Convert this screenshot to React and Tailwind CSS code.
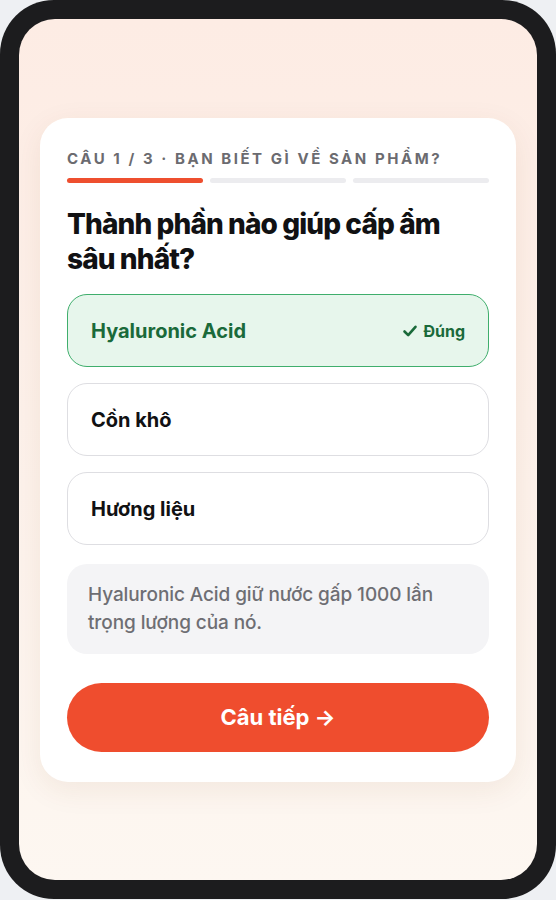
import React from "react";

function Check() {
  return (
    <svg width="16" height="16" viewBox="0 0 16 16" fill="none" className="mr-[5px]">
      <path d="M2.5 8.5 L6.2 12.2 L13.5 3.8" stroke="currentColor" strokeWidth="2.6" strokeLinecap="round" strokeLinejoin="round" />
    </svg>
  );
}

export default function App() {
  const font = { fontFamily: "Inter, 'Noto Sans', sans-serif" };
  return (
    <div className="w-[556px] h-[900px] bg-[#eef0f3]" style={font}>
      <div className="h-[899px] rounded-[54px] bg-[#1c1c1e] p-[19px]">
        <div className="h-full rounded-[36px] bg-gradient-to-b from-[#fdece4] to-[#fdf7f1] px-[21px] pt-[99px]">
          <div className="bg-white rounded-[28px] shadow-[0_8px_30px_rgba(120,60,30,0.08)] px-[27px] pt-[31px] pb-[30px]">
            <div className="text-[15px] leading-[20px] font-bold tracking-[0.17em] text-[#6b6b70] whitespace-nowrap">
              CÂU 1 / 3 · BẠN BIẾT GÌ VỀ SẢN PHẨM?
            </div>
            <div className="mt-[9px] grid grid-cols-3 gap-[7px]">
              <div className="h-[5px] rounded-full bg-[#ee4f2f]" />
              <div className="h-[5px] rounded-full bg-[#ececef]" />
              <div className="h-[5px] rounded-full bg-[#ececef]" />
            </div>
            <h1 className="mt-[24px] text-[28px] leading-[35px] font-extrabold tracking-[-0.032em] text-[#111113]">
              Thành phần nào giúp cấp ẩm sâu nhất?
            </h1>
            <div className="mt-[17px] flex flex-col gap-[16px]">
              <div className="h-[73px] rounded-[20px] border-[1.5px] border-[#3fae6c] bg-[#e7f6ec] px-[23px] flex items-center justify-between">
                <span className="text-[20px] font-bold text-[#1a6a3a]">Hyaluronic Acid</span>
                <span className="flex items-center text-[16px] font-bold text-[#1a6a3a]">
                  <Check />
                  Đúng
                </span>
              </div>
              <div className="h-[73px] rounded-[20px] border-[1.5px] border-[#dedee2] bg-white px-[23px] flex items-center">
                <span className="text-[20px] font-bold text-[#111113]">Cồn khô</span>
              </div>
              <div className="h-[73px] rounded-[20px] border-[1.5px] border-[#dedee2] bg-white px-[23px] flex items-center">
                <span className="text-[20px] font-bold text-[#111113]">Hương liệu</span>
              </div>
            </div>
            <div className="mt-[19px] rounded-[20px] bg-[#f4f4f6] px-[21px] py-[17px] text-[19px] leading-[28px] font-medium tracking-[-0.005em] text-[#6e6e73]">
              Hyaluronic Acid giữ nước gấp 1000 lần trọng lượng của nó.
            </div>
            <button className="mt-[29px] w-full h-[69px] rounded-full bg-[#ef4d2e] text-white text-[22px] font-bold flex items-center justify-center">
              Câu tiếp →
            </button>
          </div>
        </div>
      </div>
    </div>
  );
}
